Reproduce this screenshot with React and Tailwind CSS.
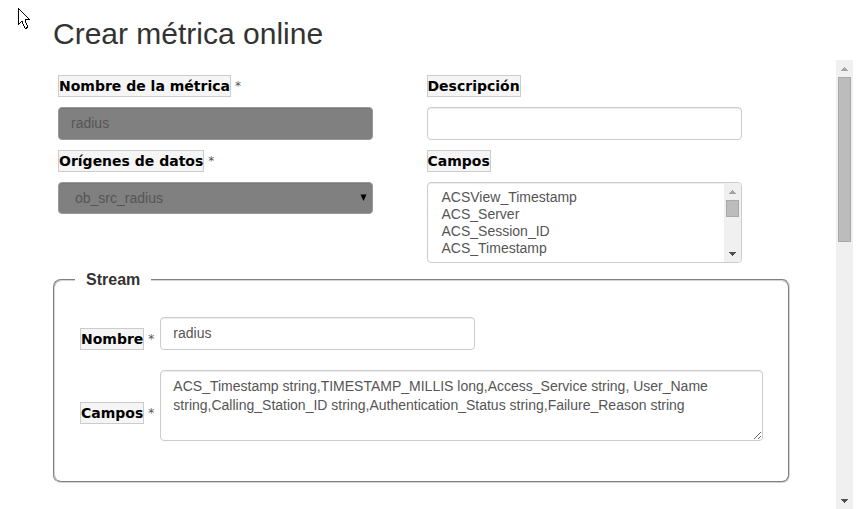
import React from 'react';

const LABEL =
  "inline-block h-[22px] whitespace-nowrap border border-[#ccc] bg-[#f5f5f5] font-['DejaVu_Sans',sans-serif] text-sm leading-5 font-bold text-black";
const CONTROL =
  'block w-full rounded border px-3 text-sm text-[#555] shadow-[inset_0_1px_1px_rgba(0,0,0,0.075)] outline-none';

function Label({ htmlFor, required, children }) {
  return (
    <div className="flex gap-1 whitespace-nowrap">
      <label htmlFor={htmlFor} className={LABEL}>
        {children}
      </label>
      {required && <span className="font-['DejaVu_Sans',sans-serif] text-xs leading-[22px] text-[#555]">*</span>}
    </div>
  );
}

function Field({ id, label, required, children }) {
  return (
    <div className="flex flex-col gap-[10px] px-[5px]">
      <Label htmlFor={id} required={required}>
        {label}
      </Label>
      <div className="w-full max-w-[315px]">{children}</div>
    </div>
  );
}

function ScrollBar({ thumb }) {
  return (
    <div aria-hidden="true" className="flex w-[17px] shrink-0 flex-col items-center justify-between bg-[#f0f0f0]">
      <div className="flex w-full flex-col items-center">
        <svg width="7" height="17" viewBox="0 0 7 17" shapeRendering="crispEdges">
          <path d="M3 7h1v1h1v1h1v1h1v1H0v-1h1V9h1V8h1z" fill="#a3a3a3" />
        </svg>
        <div className={`w-[13px] border border-[#a8a8a8] bg-[#bcbcbc] ${thumb}`} />
      </div>
      <svg width="7" height="17" viewBox="0 0 7 17" shapeRendering="crispEdges">
        <path d="M0 7h7v1H6v1H5v1H4v1H3v-1H2V9H1V8H0z" fill="#505050" />
      </svg>
    </div>
  );
}

function Pointer() {
  return (
    <svg className="absolute top-2 left-[18px]" width="12" height="21" viewBox="0 0 12 21" shapeRendering="crispEdges">
      <path
        d="M.5.5v16l3.5-3.5 2.5 6.5 1 1 2-1v-1L7 12.5v-1h4.500z"
        fill="#fff"
        stroke="#000"
      />
    </svg>
  );
}

const FIELDS = ['ACSView_Timestamp', 'ACS_Server', 'ACS_Session_ID', 'ACS_Timestamp'];

export default function App() {
  return (
    <div className="relative flex h-screen flex-col overflow-hidden bg-white pr-3 font-['Liberation_Sans',Arial,sans-serif] text-[#333]">
      <Pointer />
      <h1 className="pt-4 pl-[53px] text-3xl leading-9 font-normal">Crear métrica online</h1>
      <div className="mt-2 flex min-h-0 flex-1">
        <form className="min-w-0 flex-1 pt-[15px] pr-[46px] pl-[53px]">
          <div className="grid grid-cols-2 gap-y-[10px]">
            <Field id="metric" label="Nombre de la métrica" required>
              <input id="metric" type="text" disabled defaultValue="radius" className={`${CONTROL} h-[33px] border-[#999] bg-[#808080] pb-px`} />
            </Field>
            <Field id="description" label="Descripción">
              <input id="description" type="text" className={`${CONTROL} h-[33px] border-[#ccc]`} />
            </Field>
            <Field id="source" label="Orígenes de datos" required>
              <div className="relative">
                <select id="source" disabled className={`${CONTROL} h-8 appearance-none border-[#999] bg-[#808080] pl-4 opacity-100`}>
                  <option>ob_src_radius</option>
                </select>
                <svg className="absolute top-3 right-[6px]" width="7" height="7" viewBox="0 0 7 7">
                  <path d="M.5.5h6L3.500 7z" fill="#000" />
                </svg>
              </div>
            </Field>
            <Field id="fields" label="Campos">
              <div className="flex h-[81px] overflow-hidden rounded border border-[#ccc] shadow-[inset_0_1px_1px_rgba(0,0,0,0.075)]">
                <select
                  id="fields"
                  multiple
                  size={4}
                  className="min-w-0 flex-1 appearance-none overflow-hidden bg-transparent py-[6px] pl-3 text-sm text-[#555] outline-none [scrollbar-width:none]"
                >
                  {FIELDS.map((name) => (
                    <option key={name} className="h-[17px] min-h-0 px-[2px] py-0 leading-[17px]">
                      {name}
                    </option>
                  ))}
                </select>
                <ScrollBar thumb="h-[17px]" />
              </div>
            </Field>
          </div>
          <fieldset className="mt-[9px] rounded-lg border-2 border-[#d4d4d4] px-[25px] pb-10 [border-style:groove]">
            <legend className="-ml-[5px] px-[11px] text-base leading-4 font-bold">Stream</legend>
            <div className="grid grid-cols-[auto_1fr] items-center gap-x-[6px] gap-y-5 pt-[29px]">
              <div className="pt-[10px]">
                <Label htmlFor="stream-name" required>
                  Nombre
                </Label>
              </div>
              <div className="max-w-[315px]">
                <input id="stream-name" type="text" defaultValue="radius" className={`${CONTROL} h-[33px] border-[#ccc] pb-px`} />
              </div>
              <div className="pt-[14px]">
                <Label htmlFor="stream-fields" required>
                  Campos
                </Label>
              </div>
              <textarea
                id="stream-fields"
                className={`${CONTROL} h-[71px] resize border-[#ccc] py-[6px] leading-[19px]`}
                defaultValue="ACS_Timestamp string,TIMESTAMP_MILLIS long,Access_Service string, User_Name string,Calling_Station_ID string,Authentication_Status string,Failure_Reason string"
              />
            </div>
          </fieldset>
        </form>
        <ScrollBar thumb="h-[165px]" />
      </div>
    </div>
  );
}
